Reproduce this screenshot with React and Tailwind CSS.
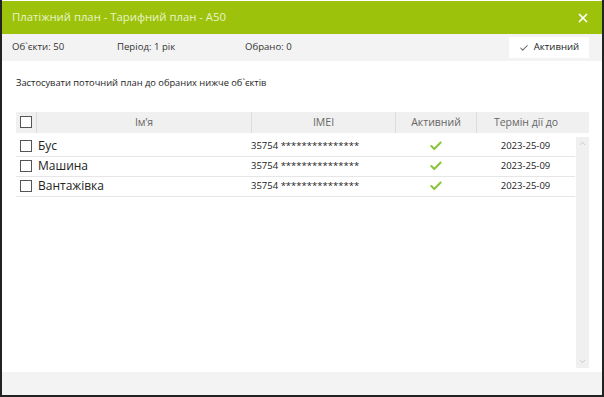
import { Check, X, ChevronUp, ChevronDown } from "lucide-react";

const objects = [
  { name: "Бус", imei: "35754 ***************", till: "2023-25-09" },
  { name: "Машина", imei: "35754 ***************", till: "2023-25-09" },
  { name: "Вантажівка", imei: "35754 ***************", till: "2023-25-09" },
];

function Box() {
  return <span className="block w-[12px] h-[12px] border border-[#555] bg-white" />;
}

export default function App() {
  return (
    <div
      className="w-[604px] h-[397px] flex flex-col bg-white border-x-2 border-b-2 border-[#222] overflow-hidden"
      style={{ fontFamily: '"Open Sans", "Noto Sans", sans-serif' }}
    >
      {/* header */}
      <div className="h-[33px] mt-[1px] bg-[#9cc20c] flex items-center justify-between pl-[10px] pr-[12px]">
        <span className="text-[11.3px] text-[#eaf4c8]">Платіжний план - Тарифний план - A50</span>
        <X size={14} strokeWidth={3} className="text-white" />
      </div>

      {/* info bar */}
      <div className="h-[27px] bg-[#f3f3f3] flex items-center text-[9.6px] text-[#333] pl-[10px] pr-[13px]">
        <span className="w-[105px]">Об`єкти: 50</span>
        <span className="w-[128px]">Період: 1 рік</span>
        <span>Обрано: 0</span>
        <div className="ml-auto w-[80px] h-[21px] bg-white flex items-center justify-center gap-[5px] text-[9.6px] text-[#222]">
          <Check size={10} strokeWidth={2.5} className="text-[#666]" />
          Активний
        </div>
      </div>

      {/* body */}
      <div className="flex-1 flex flex-col pl-[14px] pr-[13px]">
        <p className="text-[9.3px] text-[#222] mt-[15px]">Застосувати поточний план до обраних нижче об`єктів</p>

        <div className="mt-[22px] h-[21px] bg-[#f0f0f0] flex items-center text-[10.5px] text-[#666]">
          <div className="w-[20px] flex justify-center"><Box /></div>
          <div className="w-[215px] h-full border-l border-[#ddd] flex items-center justify-center">Ім’я</div>
          <div className="w-[144px] h-full border-l border-[#ddd] flex items-center justify-center">IMEI</div>
          <div className="w-[81px] h-full border-l border-[#ddd] flex items-center justify-center">Активний</div>
          <div className="w-[99px] h-full border-l border-[#ddd] flex items-center justify-center">Термін дії до</div>
          <div className="flex-1" />
        </div>

        <div className="flex-1 flex mt-[4px] mb-[4px]">
          <div className="w-[559px] flex flex-col">
            {objects.map((o) => (
              <div key={o.name} className="h-[20px] flex items-center border-b border-[#e6e6e6]">
                <div className="w-[20px] flex justify-center"><Box /></div>
                <div className="w-[215px] pl-[2px] text-[12px] text-[#222]">{o.name}</div>
                <div className="w-[144px] text-[9.5px] text-[#222]">{o.imei}</div>
                <div className="w-[81px] flex justify-center">
                  <Check size={14} strokeWidth={3.5} className="text-[#8cc43c]" />
                </div>
                <div className="w-[99px] text-center text-[9.5px] text-[#222]">{o.till}</div>
              </div>
            ))}
          </div>
          <div className="w-[13px] ml-auto bg-[#f0f0f0] flex flex-col justify-between items-center py-[2px]">
            <ChevronUp size={9} className="text-[#bbb]" />
            <ChevronDown size={9} className="text-[#bbb]" />
          </div>
        </div>
      </div>

      {/* footer */}
      <div className="h-[23px] bg-[#f3f3f3]" />
    </div>
  );
}
